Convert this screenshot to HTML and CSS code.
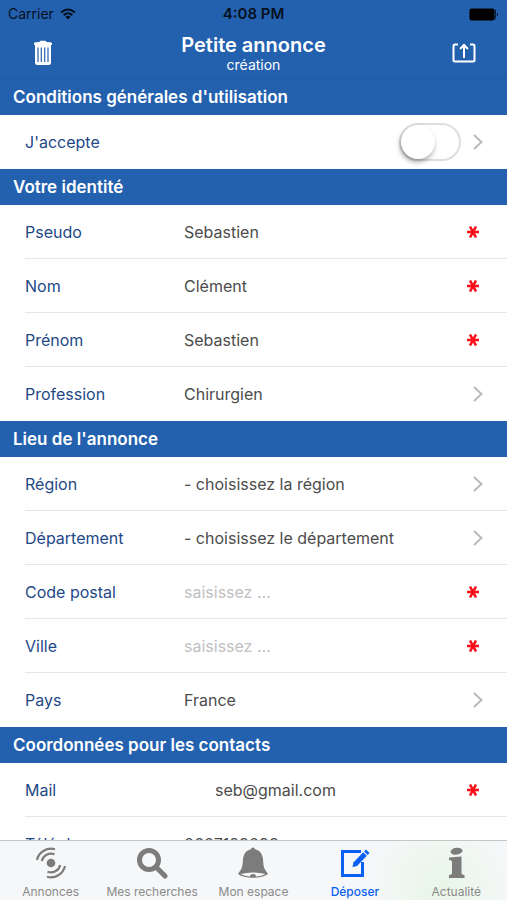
FILE: index.html
```html
<!DOCTYPE html>
<html lang="fr">
<head>
<meta charset="utf-8">
<meta name="viewport" content="width=device-width, initial-scale=1">
<title>Petite annonce</title>
<link rel="stylesheet" href="styles.css">
</head>
<body>
<header class="top">
  <div class="status">
    <div class="carrier"><span>Carrier</span>
      <svg width="16" height="12" viewBox="0 0 16 12" fill="none" stroke="#06101f" stroke-width="2"><path d="M1 4.5Q8-1.5 15 4.5M3.6 7.2Q8 3.4 12.4 7.2"/><path d="M5.4 8.8Q8 6.8 10.6 8.8L8 11.6Z" fill="#06101f" stroke="none"/></svg>
    </div>
    <time class="clock">4:08 PM</time>
    <svg class="battery" width="30" height="13" viewBox="0 0 30 13"><rect x="0.5" y="0.5" width="25" height="12" rx="2" fill="#000"/><path d="M26 1.5q1.5 5 0 10" stroke="#06101f" fill="none"/><path d="M28 4.5q2 2 0 4z" fill="#06101f"/></svg>
  </div>
  <div class="bar">
    <button class="bar-button" type="button" aria-label="Supprimer">
      <svg width="20" height="26" viewBox="0 0 20 26"><path d="M1 5V3.400Q1 2.400 2.400 2.200L6.500 2Q7 .8 8 .8h4q1 0 1.500 1.200L17.600 2.200Q19 2.400 19 3.400V5Z" fill="#fff"/><path d="M2 4.500h16v18q0 2.500-2.500 2.500h-11Q2 25 2 22.500Z" fill="#fff"/><path d="M5 7.500v14.500M8.300 7.500v14.500M11.700 7.500v14.500M15 7.500v14.500" stroke="#2361af" stroke-width="1.200"/></svg>
    </button>
    <div class="heading"><h1>Petite annonce</h1><p>création</p></div>
    <button class="bar-button" type="button" aria-label="Envoyer">
      <svg width="24" height="20" viewBox="0 0 24 20" fill="none" stroke="#fff" stroke-width="2"><path d="M6 1.500H3Q1.500 1.500 1.500 3v14q0 1.500 1.500 1.500h18q1.500 0 1.500-1.500V3q0-1.500-1.500-1.500h-3"/><path d="M12 15V2.500M8 6l4-4 4 4"/></svg>
    </button>
  </div>
</header>

<svg class="symbols" aria-hidden="true">
  <symbol id="chevron" viewBox="0 0 10 16"><path d="M1 1l7.500 7L1 15" fill="none" stroke="#b9b9bd" stroke-width="2"/></symbol>
  <symbol id="star" viewBox="0 0 14 14"><path d="M1 7h12M4 1.500l6 11M10 1.500L4 12.500" fill="none" stroke="#fa0f19" stroke-width="2.600"/></symbol>
</svg>

<main class="form">
  <section>
    <h2>Conditions générales d'utilisation</h2>
    <div class="row"><label for="accept">J'accepte</label><input class="switch" id="accept" type="checkbox"><svg class="chevron"><use href="#chevron"/></svg></div>
  </section>
  <section>
    <h2>Votre identité</h2>
    <div class="row"><label for="pseudo">Pseudo</label><input class="value" id="pseudo" value="Sebastien"><svg class="star"><use href="#star"/></svg></div>
    <div class="row"><label for="nom">Nom</label><input class="value" id="nom" value="Clément"><svg class="star"><use href="#star"/></svg></div>
    <div class="row"><label for="prenom">Prénom</label><input class="value" id="prenom" value="Sebastien"><svg class="star"><use href="#star"/></svg></div>
    <div class="row"><label for="profession">Profession</label><select class="value" id="profession"><option>Chirurgien</option></select><svg class="chevron"><use href="#chevron"/></svg></div>
  </section>
  <section>
    <h2>Lieu de l'annonce</h2>
    <div class="row"><label for="region">Région</label><select class="value" id="region"><option>- choisissez la région</option></select><svg class="chevron"><use href="#chevron"/></svg></div>
    <div class="row"><label for="departement">Département</label><select class="value" id="departement"><option>- choisissez le département</option></select><svg class="chevron"><use href="#chevron"/></svg></div>
    <div class="row"><label for="code">Code postal</label><input class="value" id="code" placeholder="saisissez ..."><svg class="star"><use href="#star"/></svg></div>
    <div class="row"><label for="ville">Ville</label><input class="value" id="ville" placeholder="saisissez ..."><svg class="star"><use href="#star"/></svg></div>
    <div class="row"><label for="pays">Pays</label><select class="value" id="pays"><option>France</option></select><svg class="chevron"><use href="#chevron"/></svg></div>
  </section>
  <section>
    <h2>Coordonnées pour les contacts</h2>
    <div class="row"><label for="mail">Mail</label><input class="value mail" id="mail" type="email" value="seb@gmail.com"><svg class="star"><use href="#star"/></svg></div>
    <div class="row"><label for="tel">Téléphone</label><input class="value" id="tel" type="tel" value="0607123098"></div>
  </section>
</main>

<nav class="tabs">
  <a href="#annonces"><svg width="32" height="32" viewBox="0 0 32 32" fill="none" stroke="#7c7c7c" stroke-width="2.200"><circle cx="16" cy="16" r="4.300" fill="#7c7c7c" stroke="none"/><path d="M6.800 14A9.400 9.400 0 0 1 19.500 7.300M2 13A14.300 14.300 0 0 1 20 2.300M25.200 18A9.400 9.400 0 0 1 12.500 24.700M30 19A14.300 14.300 0 0 1 12 29.700"/></svg><span>Annonces</span></a>
  <a href="#recherches"><svg width="32" height="32" viewBox="0 0 32 32" fill="none" stroke="#7c7c7c"><circle cx="13" cy="13" r="9.500" stroke-width="5"/><path d="M20.500 20.500L29 29" stroke-width="5" stroke-linecap="round"/></svg><span>Mes recherches</span></a>
  <a href="#espace"><svg width="32" height="32" viewBox="0 0 32 32" fill="#7c7c7c"><path d="M16 .5q1.800 0 2 1.700C24.500 3.500 26 9 26.200 15c.1 4 1.300 8 4.300 11 1.500 2-6 4.800-14.500 4.800S0 28 1.500 26c3-3 4.200-7 4.300-11C6 9 7.500 3.500 14 2.200q.2-1.700 2-1.700Z"/><path d="M3.500 27q12.500-3 25 0-4 2.200-9.500 2.600 0-2.600-3-2.600t-3 2.600q-5.500-.4-9.500-2.600Z" fill="#f5f7f8"/></svg><span>Mon espace</span></a>
  <a class="active" href="#deposer"><svg width="32" height="32" viewBox="0 0 32 32" fill="none" stroke="#0b60f4"><path d="M22 4.500H3.500v24h20V15" stroke-width="3"/><path d="M16 17.500L26 7" stroke-width="5"/><path d="M26.800 6.200l2-2" stroke-width="5"/><path d="M13.500 20l1-5 4 4Z" fill="#0b60f4" stroke="none"/></svg><span>Déposer</span></a>
  <a href="#actualite"><svg width="32" height="32" viewBox="0 0 32 32" fill="#7c7c7c"><ellipse cx="16.500" cy="4.200" rx="6" ry="3.400" transform="rotate(-8 16.500 4.200)"/><path d="M9 10.500l12.500-1v16.500q0 1.800 3 2v3H9v-3q3-.2 3-2V15q0-1.800-3-2Z"/></svg><span>Actualité</span></a>
</nav>
</body>
</html>
```

FILE: styles.css
```css
* { box-sizing: border-box; }

body {
  margin: 0;
  height: 100vh;
  display: flex;
  flex-direction: column;
  background: #fff;
  color: #4c4c4c;
  font: 16px/20px Inter, "Liberation Sans", sans-serif;
}

h1, h2, p { margin: 0; }

.symbols { display: none; }

.top {
  flex: none;
  background: #2361af;
  border-bottom: 1px solid #1f5aa6;
}

.status {
  height: 28px;
  padding: 0 8px;
  display: grid;
  grid-template-columns: 1fr auto 1fr;
  align-items: center;
  color: #06101f;
  font-size: 14px;
}

.carrier {
  display: flex;
  align-items: center;
  gap: 6px;
}

.clock {
  font-size: 15px;
  font-weight: 600;
}

.battery { justify-self: end; }

.bar {
  height: 50px;
  padding: 0 20px;
  display: flex;
  align-items: center;
  justify-content: space-between;
  color: #fff;
}

.bar-button {
  width: 46px;
  height: 46px;
  padding: 0;
  display: grid;
  place-items: center;
  border: 0;
  background: none;
}

.heading { text-align: center; }

h1 {
  font-size: 20px;
  font-weight: 600;
  line-height: 24px;
}

.heading p {
  font-size: 14px;
  line-height: 16px;
}

.form {
  flex: 1;
  min-height: 0;
  overflow-y: auto;
  scrollbar-width: none;
}

h2 {
  padding: 0 13px;
  background: #2361af;
  color: #fff;
  font-size: 17px;
  font-weight: 600;
  line-height: 36px;
}

.row {
  height: 54px;
  margin-left: 25px;
  padding-right: 24px;
  display: flex;
  align-items: center;
  border-bottom: 1px solid #e6e6e8;
}

.row:last-child { border-bottom-color: transparent; }

label {
  width: 159px;
  color: #1e4987;
}

.value {
  flex: 1;
  min-width: 0;
  height: 40px;
  padding: 0;
  appearance: none;
  border: 0;
  background: none;
  color: inherit;
  font: inherit;
}

.value::placeholder { color: #c0c0c4; }

.mail { padding-left: 31px; }

.chevron {
  width: 10px;
  height: 16px;
}

.star {
  width: 14px;
  height: 14px;
  margin-right: 3px;
}

.switch {
  width: 62px;
  height: 38px;
  margin: 0 12px 0 auto;
  appearance: none;
  border: 2px solid #dedede;
  border-radius: 19px;
  background: #fff;
}

.switch::before {
  content: "";
  display: block;
  width: 34px;
  height: 34px;
  border-radius: 50%;
  background: #fff;
  box-shadow: -1px 3px 5px #00000059;
}

.switch:checked::before { margin-left: auto; }

.tabs {
  flex: none;
  height: 60px;
  display: grid;
  grid-template-columns: repeat(5, 1fr);
  border-top: 1px solid #c4c6c8;
  background: radial-gradient(circle at 87% 80%, #e8f6e7, #f5f7f8 70px);
}

.tabs a {
  padding-top: 6px;
  display: flex;
  flex-direction: column;
  align-items: center;
  gap: 5px;
  color: #8a8a8a;
  font-size: 12px;
  line-height: 16px;
  text-decoration: none;
  white-space: nowrap;
}

.tabs .active {
  color: #0b60f4;
  font-weight: 500;
}
```
